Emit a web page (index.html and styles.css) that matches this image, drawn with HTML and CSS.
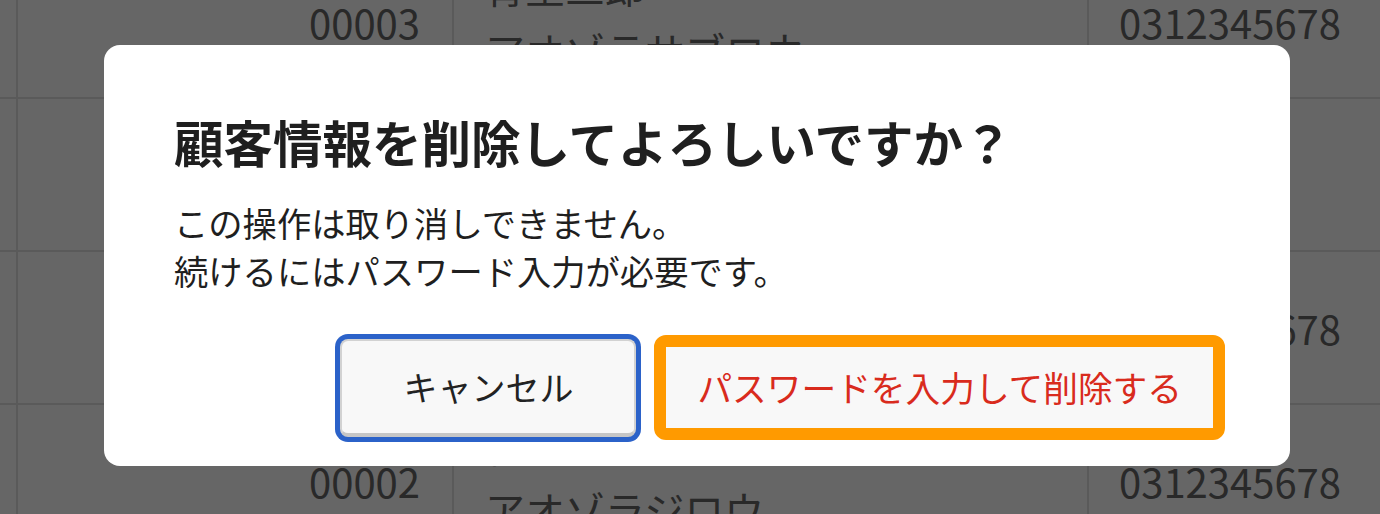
FILE: index.html
```html
<!DOCTYPE html>
<html lang="ja">
<head>
<meta charset="utf-8">
<title>顧客情報の削除</title>
<link rel="stylesheet" href="styles.css">
</head>
<body>
<div class="table">
  <div class="row">
    <div class="cell sel"></div>
    <div class="cell code">00003</div>
    <div class="cell name"><span>青空三郎</span><span>アオゾラサブロウ</span></div>
    <div class="cell tel">0312345678</div>
  </div>
  <div class="row">
    <div class="cell sel"></div>
    <div class="cell code">00005</div>
    <div class="cell name"><span>青空五郎</span><span>アオゾラゴロウ</span></div>
    <div class="cell tel"></div>
  </div>
  <div class="row">
    <div class="cell sel"></div>
    <div class="cell code">00001</div>
    <div class="cell name"><span>青空一郎</span><span>アオゾライチロウ</span></div>
    <div class="cell tel">0312345678</div>
  </div>
  <div class="row">
    <div class="cell sel"></div>
    <div class="cell code">00002</div>
    <div class="cell name"><span>青空次郎</span><span>アオゾラジロウ</span></div>
    <div class="cell tel">0312345678</div>
  </div>
</div>

<div class="overlay">
  <div class="modal" role="dialog">
    <h2 class="modal-title">顧客情報を削除してよろしいですか？</h2>
    <p class="modal-text">この操作は取り消しできません。<br>続けるにはパスワード入力が必要です。</p>
    <div class="actions">
      <button class="btn btn-cancel">キャンセル</button>
      <button class="btn btn-danger">パスワードを入力して削除する</button>
    </div>
  </div>
</div>
</body>
</html>
```

FILE: styles.css
```css
html, body {
  margin: 0;
  padding: 0;
  background: #ffffff;
  overflow: hidden;
}

body {
  font-family: "Noto Sans CJK JP", "Noto Sans", sans-serif;
  color: #666666;
}

.table {
  margin-top: -54px;
  width: 1380px;
}

.row {
  display: grid;
  grid-template-columns: 18px 436px 635px 291px;
  height: 153px;
  border-bottom: 2px solid #e1e1e1;
  box-sizing: border-box;
}

.cell {
  border-right: 2px solid #e1e1e1;
  display: flex;
  align-items: center;
  font-size: 40px;
  line-height: 54px;
  white-space: nowrap;
}

.cell.code {
  justify-content: flex-end;
  padding-right: 32px;
}

.cell.name {
  flex-direction: column;
  align-items: flex-start;
  justify-content: center;
  gap: 10px;
  padding-left: 31px;
  padding-bottom: 8px;
}

.cell.tel {
  border-right: none;
  padding-left: 30px;
}

.overlay {
  position: fixed;
  inset: 0;
  background: rgba(0, 0, 0, 0.6);
  padding: 45px 0 0 104px;
}

.modal {
  width: 1186px;
  box-sizing: border-box;
  background: #ffffff;
  border-radius: 16px;
  padding: 62px 65px 26px 70px;
  color: #1f1f1f;
}

.modal-title {
  margin: 0;
  font-size: 49.5px;
  line-height: 69px;
  font-weight: 700;
}

.modal-text {
  margin: 22px 0 0;
  font-size: 34.3px;
  line-height: 48px;
}

.actions {
  margin-top: 41px;
  display: flex;
  justify-content: flex-end;
  align-items: center;
  gap: 18px;
}

.btn {
  font-family: inherit;
  font-size: 34px;
  line-height: 48px;
  background: #f8f8f8;
  margin: 0;
  cursor: pointer;
}

.btn-cancel {
  color: #222222;
  border: 2px solid #d2d2d2;
  border-bottom: 4px solid #c6c6c6;
  border-radius: 8px;
  padding: 22px 61px;
  box-shadow: 0 0 0 5px #2b62c9;
}

.btn-danger {
  color: #d92b1d;
  font-size: 34.7px;
  border: 12px solid #ff9a00;
  border-radius: 12px;
  padding: 16px 31px 17px;
}
```
